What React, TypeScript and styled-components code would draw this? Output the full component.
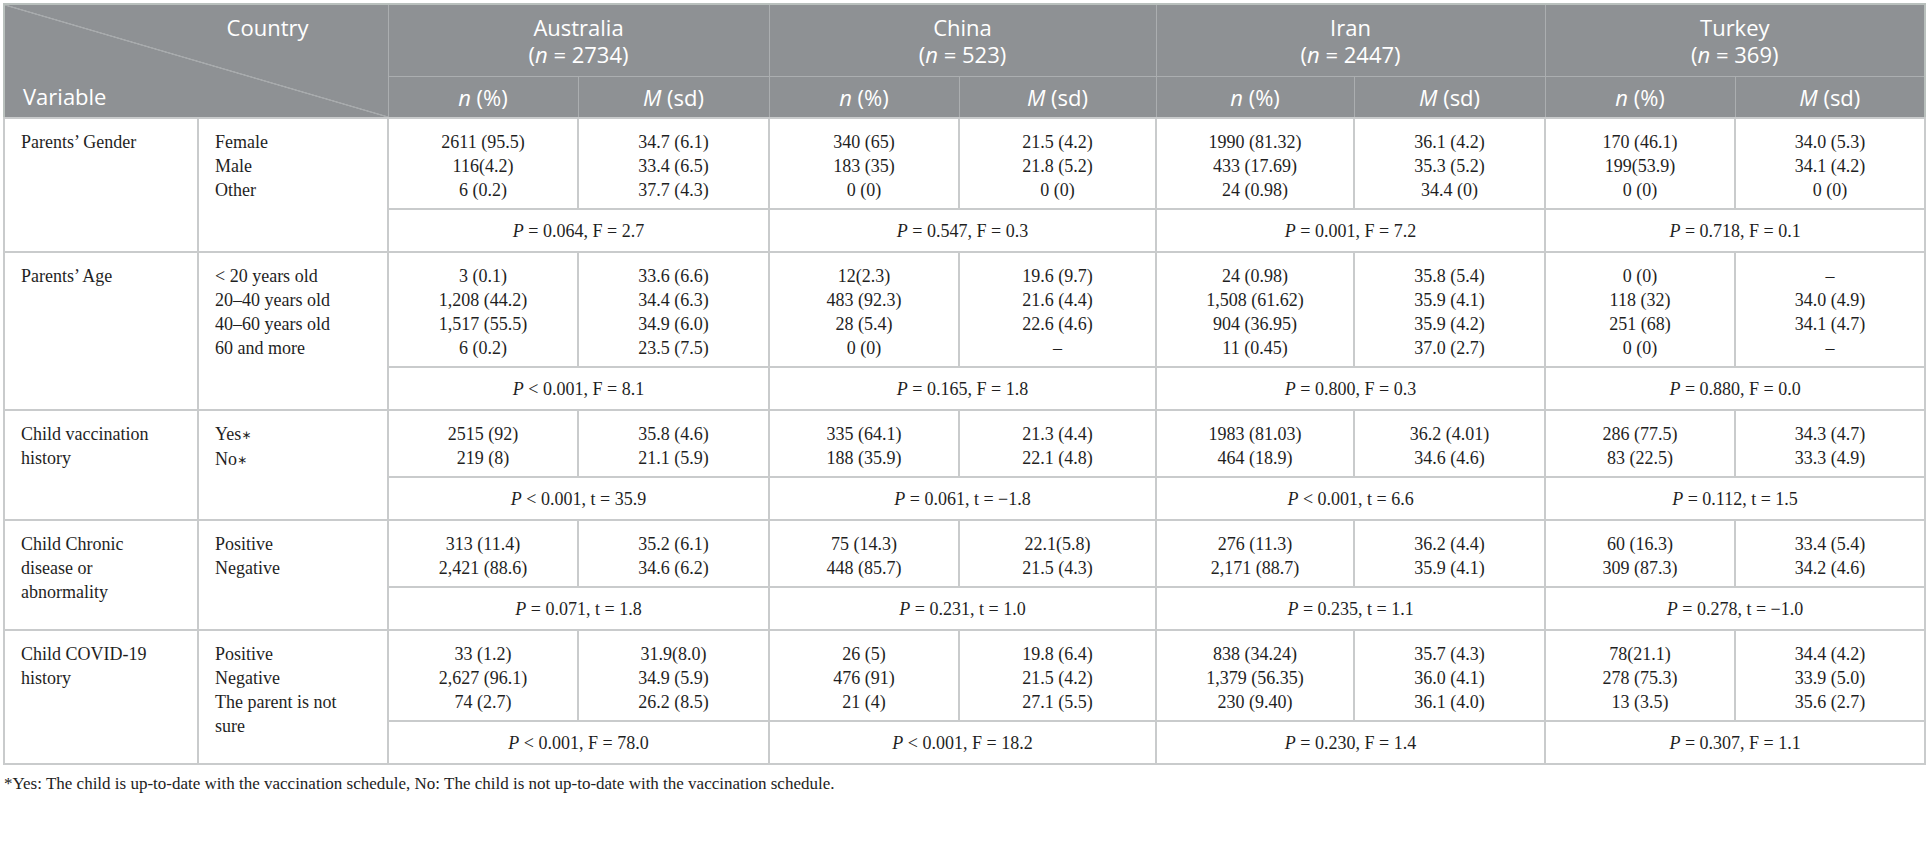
import React from "react";
import styled, { createGlobalStyle } from "styled-components";

const GlobalStyle = createGlobalStyle`
  html, body {
    margin: 0;
    padding: 0;
    background: #ffffff;
  }
`;

const Page = styled.div`
  padding: 3px 0 0 3px;
  font-family: "Liberation Serif", "Times New Roman", serif;
  color: #1f1f1f;
`;

const Table = styled.table`
  width: 1921px;
  table-layout: fixed;
  border-collapse: collapse;
  border: 2px solid #b9c0bd;
`;

const Head = styled.th`
  background: #8e9194;
  color: #ffffff;
  font-family: "Open Sans", "Liberation Sans", sans-serif;
  font-weight: 400;
  font-size: 22px;
  line-height: 25px;
  text-align: center;
  vertical-align: middle;
  padding: 0;
  border: 1px solid #abaeb0;

  i {
    font-style: italic;
  }
`;

const CountryHead = styled(Head)`
  height: 71px;
  line-height: 27px;
`;

const SubHead = styled(Head)`
  height: 40px;
`;

const Corner = styled(Head)`
  vertical-align: top;
  text-align: left;
  padding: 10px 79px 8px 18px;
  background:
    linear-gradient(
      to top right,
      transparent calc(50% - 1px),
      #a7aaac calc(50% - 0.5px),
      #a7aaac calc(50% + 0.5px),
      transparent calc(50% + 1px)
    ),
    #8e9194;
`;

const CornerTop = styled.div`
  text-align: right;
`;

const CornerBottom = styled.div`
  margin-top: 44px;
`;

const Cell = styled.td<{ $left?: boolean }>`
  font-size: 18px;
  line-height: 24px;
  padding: 11px 16px 6px;
  text-align: ${(p) => (p.$left ? "left" : "center")};
  vertical-align: top;
  white-space: nowrap;
  border: 2px solid #c9cbcc;
`;

const Stat = styled.td`
  font-size: 18px;
  line-height: 24px;
  padding: 9px 16px 8px;
  text-align: center;
  vertical-align: middle;
  white-space: nowrap;
  border: 2px solid #c9cbcc;
`;

const Line = styled.div`
  min-height: 24px;
`;

const Star = styled.span`
  font-family: "DejaVu Sans", sans-serif;
  font-size: 12px;
  vertical-align: 1px;
`;

const Note = styled.p`
  margin: 8px 0 0 1px;
  font-size: 17px;
  line-height: 22px;
  color: #222;
`;

type StatRow = { op: string; p: string; rest: string };
type Group = {
  label: string[];
  cats: string[];
  cols: [string[], string[]][];
  stats: StatRow[];
};

const widths = [194, 190, 190, 191, 190, 197, 198, 191, 190, 190];

const countries = [
  { name: "Australia", n: "2734" },
  { name: "China", n: "523" },
  { name: "Iran", n: "2447" },
  { name: "Turkey", n: "369" },
];

const groups: Group[] = [
  {
    label: ["Parents\u2019 Gender"],
    cats: ["Female", "Male", "Other"],
    cols: [
      [["2611 (95.5)", "116(4.2)", "6 (0.2)"], ["34.7 (6.1)", "33.4 (6.5)", "37.7 (4.3)"]],
      [["340 (65)", "183 (35)", "0 (0)"], ["21.5 (4.2)", "21.8 (5.2)", "0 (0)"]],
      [["1990 (81.32)", "433 (17.69)", "24 (0.98)"], ["36.1 (4.2)", "35.3 (5.2)", "34.4 (0)"]],
      [["170 (46.1)", "199(53.9)", "0 (0)"], ["34.0 (5.3)", "34.1 (4.2)", "0 (0)"]],
    ],
    stats: [
      { op: "=", p: "0.064", rest: "F = 2.7" },
      { op: "=", p: "0.547", rest: "F = 0.3" },
      { op: "=", p: "0.001", rest: "F = 7.2" },
      { op: "=", p: "0.718", rest: "F = 0.1" },
    ],
  },
  {
    label: ["Parents\u2019 Age"],
    cats: ["< 20 years old", "20\u201340 years old", "40\u201360 years old", "60 and more"],
    cols: [
      [["3 (0.1)", "1,208 (44.2)", "1,517 (55.5)", "6 (0.2)"], ["33.6 (6.6)", "34.4 (6.3)", "34.9 (6.0)", "23.5 (7.5)"]],
      [["12(2.3)", "483 (92.3)", "28 (5.4)", "0 (0)"], ["19.6 (9.7)", "21.6 (4.4)", "22.6 (4.6)", "\u2013"]],
      [["24 (0.98)", "1,508 (61.62)", "904 (36.95)", "11 (0.45)"], ["35.8 (5.4)", "35.9 (4.1)", "35.9 (4.2)", "37.0 (2.7)"]],
      [["0 (0)", "118 (32)", "251 (68)", "0 (0)"], ["\u2013", "34.0 (4.9)", "34.1 (4.7)", "\u2013"]],
    ],
    stats: [
      { op: "<", p: "0.001", rest: "F = 8.1" },
      { op: "=", p: "0.165", rest: "F = 1.8" },
      { op: "=", p: "0.800", rest: "F = 0.3" },
      { op: "=", p: "0.880", rest: "F = 0.0" },
    ],
  },
  {
    label: ["Child vaccination", "history"],
    cats: ["Yes*", "No*"],
    cols: [
      [["2515 (92)", "219 (8)"], ["35.8 (4.6)", "21.1 (5.9)"]],
      [["335 (64.1)", "188 (35.9)"], ["21.3 (4.4)", "22.1 (4.8)"]],
      [["1983 (81.03)", "464 (18.9)"], ["36.2 (4.01)", "34.6 (4.6)"]],
      [["286 (77.5)", "83 (22.5)"], ["34.3 (4.7)", "33.3 (4.9)"]],
    ],
    stats: [
      { op: "<", p: "0.001", rest: "t = 35.9" },
      { op: "=", p: "0.061", rest: "t = \u22121.8" },
      { op: "<", p: "0.001", rest: "t = 6.6" },
      { op: "=", p: "0.112", rest: "t = 1.5" },
    ],
  },
  {
    label: ["Child Chronic", "disease or", "abnormality"],
    cats: ["Positive", "Negative"],
    cols: [
      [["313 (11.4)", "2,421 (88.6)"], ["35.2 (6.1)", "34.6 (6.2)"]],
      [["75 (14.3)", "448 (85.7)"], ["22.1(5.8)", "21.5 (4.3)"]],
      [["276 (11.3)", "2,171 (88.7)"], ["36.2 (4.4)", "35.9 (4.1)"]],
      [["60 (16.3)", "309 (87.3)"], ["33.4 (5.4)", "34.2 (4.6)"]],
    ],
    stats: [
      { op: "=", p: "0.071", rest: "t = 1.8" },
      { op: "=", p: "0.231", rest: "t = 1.0" },
      { op: "=", p: "0.235", rest: "t = 1.1" },
      { op: "=", p: "0.278", rest: "t = \u22121.0" },
    ],
  },
  {
    label: ["Child COVID-19", "history"],
    cats: ["Positive", "Negative", "The parent is not", "sure"],
    cols: [
      [["33 (1.2)", "2,627 (96.1)", "74 (2.7)"], ["31.9(8.0)", "34.9 (5.9)", "26.2 (8.5)"]],
      [["26 (5)", "476 (91)", "21 (4)"], ["19.8 (6.4)", "21.5 (4.2)", "27.1 (5.5)"]],
      [["838 (34.24)", "1,379 (56.35)", "230 (9.40)"], ["35.7 (4.3)", "36.0 (4.1)", "36.1 (4.0)"]],
      [["78(21.1)", "278 (75.3)", "13 (3.5)"], ["34.4 (4.2)", "33.9 (5.0)", "35.6 (2.7)"]],
    ],
    stats: [
      { op: "<", p: "0.001", rest: "F = 78.0" },
      { op: "<", p: "0.001", rest: "F = 18.2" },
      { op: "=", p: "0.230", rest: "F = 1.4" },
      { op: "=", p: "0.307", rest: "F = 1.1" },
    ],
  },
];

// "Yes*" style labels get a small centred asterisk like the journal layout
const Label = ({ text }: { text: string }) =>
  text.endsWith("*") ? (
    <>
      {text.slice(0, -1)}
      <Star>{"\u2217"}</Star>
    </>
  ) : (
    <>{text}</>
  );

const Lines = ({ items }: { items: string[] }) => (
  <>
    {items.map((t, i) => (
      <Line key={i}>
        <Label text={t} />
      </Line>
    ))}
  </>
);

const App = () => {
  return (
    <Page>
      <GlobalStyle />
      <Table>
        <colgroup>
          {widths.map((w, i) => (
            <col key={i} style={{ width: w }} />
          ))}
        </colgroup>
        <thead>
          <tr>
            <Corner rowSpan={2} colSpan={2}>
              <CornerTop>Country</CornerTop>
              <CornerBottom>Variable</CornerBottom>
            </Corner>
            {countries.map((c) => (
              <CountryHead key={c.name} colSpan={2}>
                {c.name}
                <br />(<i>n</i> = {c.n})
              </CountryHead>
            ))}
          </tr>
          <tr>
            {countries.map((c) => (
              <React.Fragment key={c.name}>
                <SubHead>
                  <i>n</i> (%)
                </SubHead>
                <SubHead>
                  <i>M</i> (sd)
                </SubHead>
              </React.Fragment>
            ))}
          </tr>
        </thead>
        <tbody>
          {groups.map((g, gi) => (
            <React.Fragment key={gi}>
              <tr>
                <Cell $left rowSpan={2}>
                  <Lines items={g.label} />
                </Cell>
                <Cell $left rowSpan={2}>
                  <Lines items={g.cats} />
                </Cell>
                {g.cols.map(([n, m], ci) => (
                  <React.Fragment key={ci}>
                    <Cell>
                      <Lines items={n} />
                    </Cell>
                    <Cell>
                      <Lines items={m} />
                    </Cell>
                  </React.Fragment>
                ))}
              </tr>
              <tr>
                {g.stats.map((s, si) => (
                  <Stat key={si} colSpan={2}>
                    <i>P</i> {s.op} {s.p}, {s.rest}
                  </Stat>
                ))}
              </tr>
            </React.Fragment>
          ))}
        </tbody>
      </Table>
      <Note>
        *Yes: The child is up-to-date with the vaccination schedule, No: The child is not
        up-to-date with the vaccination schedule.
      </Note>
    </Page>
  );
};

export default App;
